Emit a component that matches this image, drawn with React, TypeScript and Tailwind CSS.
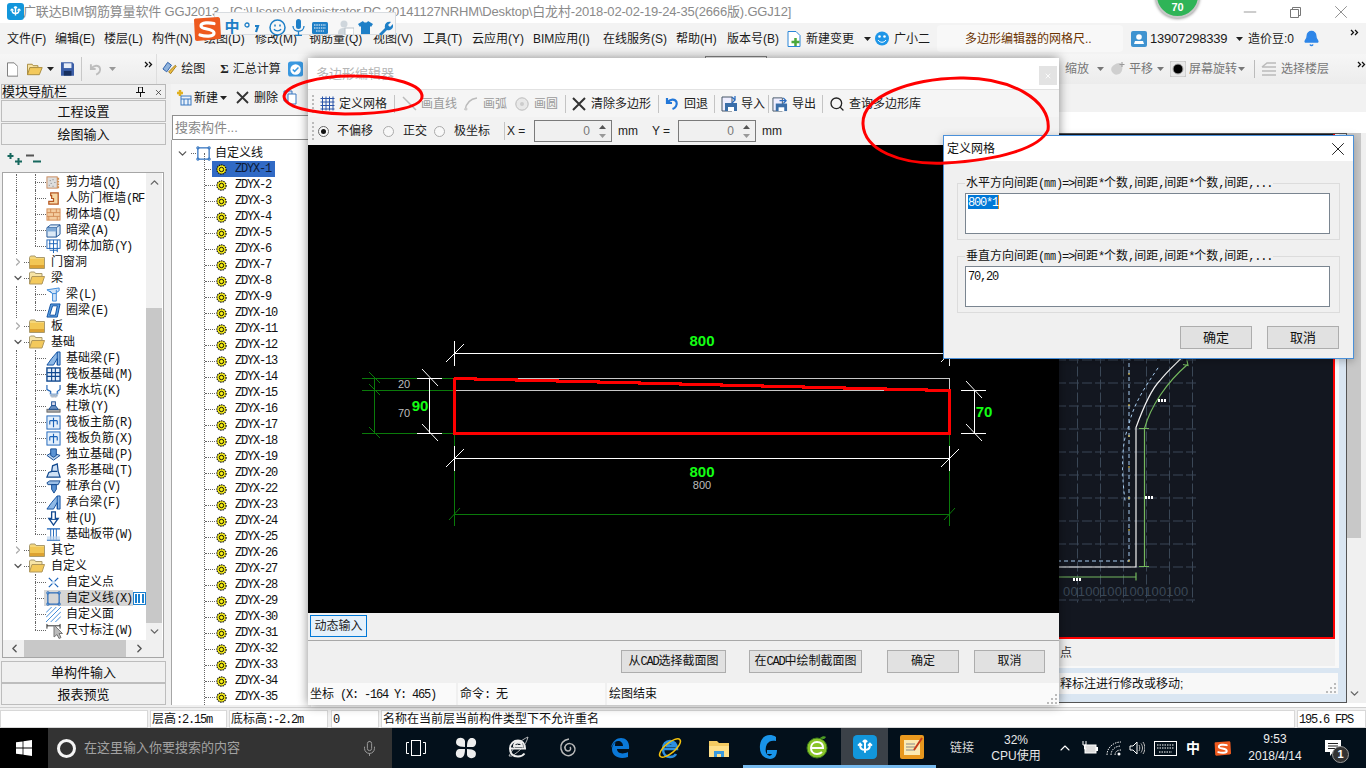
import React from 'react';
import { X, Minus, Mic, Bell, ChevronUp, ChevronDown, ChevronLeft, ChevronRight, Search } from 'lucide-react';

const MONO = "[font-family:'Liberation_Mono',monospace] tracking-[-1.2px]";

function Mixed({ t }: { t: string }) {
  const parts = t.split(/([\x00-\x7f]+)/).filter(Boolean);
  return (
    <span className="whitespace-pre">
      {parts.map((p, i) =>
        /^[\x00-\x7f]/.test(p) ? (
          <span key={i} className="[font-family:'Liberation_Mono',monospace] tracking-[-1.2px]">{p}</span>
        ) : (
          <span key={i}>{p}</span>
        ),
      )}
    </span>
  );
}

const S = ({ s = 16, w, h, v = '0 0 16 16', children, className }: any) => (
  <svg width={w ?? s} height={h ?? s} viewBox={v} fill="none" className={'shrink-0 ' + (className || '')}>
    {children}
  </svg>
);

const Caret = ({ c = '#222' }: { c?: string }) => (
  <svg width="7" height="4" viewBox="0 0 7 4" className="shrink-0"><path d="M0 0h7L3.5 4z" fill={c} /></svg>
);
const Dbl = () => (
  <svg width="9" height="7" viewBox="0 0 9 7" className="shrink-0"><path d="M1 1l2.5 2.5L1 6M5 1l2.5 2.5L5 6" stroke="#111" strokeWidth="1.3" fill="none" /></svg>
);
const Sep = ({ c = 'ml-[6px] mr-[6px]' }: { c?: string }) => <span className={'w-px h-[18px] bg-[#c4c4c4] shrink-0 ' + c} />;

const AppIcon = ({ s = 17 }: { s?: number }) => (
  <S s={s} v="0 0 17 17">
    <rect width="17" height="17" rx="3" fill="#1296db" />
    <path d="M8.5 3.5v9M5 7c0 2.5 1.5 3.5 3.5 3.5S12 9.5 12 7M8.5 3.5L7 5M8.5 3.5L10 5" stroke="#fff" strokeWidth="1.4" />
    <path d="M3.5 7.5L5 6l1.5 1.5M10.5 7.5L12 6l1.5 1.5" stroke="#fff" strokeWidth="1.1" />
  </S>
);

const FolderClosed = () => (
  <S w={16} h={14} v="0 0 16 14">
    <path d="M.5 2.5L1.5 1h4.5l1 1.5h8.5v11H.5z" fill="#f5d77b" stroke="#a99a6e" />
    <rect x="1" y="4" width="14" height="9" fill="#f2c755" />
    <rect x="1" y="10" width="14" height="3" fill="#dca232" />
  </S>
);
const FolderOpen = () => (
  <S w={16} h={14} v="0 0 16 14">
    <path d="M.5 13V2l1-1h4l1 1.5h6.5V5" stroke="#a99a6e" fill="#f7e4a6" />
    <path d="M3 5.5h12.5L13 13H.5z" fill="#f3c95c" stroke="#b0975a" />
  </S>
);

const icons: Record<string, React.ReactNode> = {
  shear: (
    <>
      <rect x="1" y="2" width="11" height="12" fill="#ddd" stroke="#c9895a" />
      <path d="M3 11h1M5 9h1M7 12h1M4 6h1M9 8h1M7 5h1" stroke="#777" />
      <path d="M13 3v11" stroke="#d08a4a" strokeDasharray="2 1" strokeWidth="2" />
    </>
  ),
  door: <path d="M5 2h8v12H3v-3h5V8H6V5H5z" fill="#f7d9a7" stroke="#b5551f" strokeWidth="1.3" />,
  brick: (
    <>
      <rect x="1" y="2" width="14" height="12" fill="#f4cda0" stroke="#d28d58" />
      <path d="M1 6h14M1 10h14M5 2v4M11 2v4M8 6v4M3 10v4M12 10v4" stroke="#d28d58" />
    </>
  ),
  dark: (
    <>
      <path d="M1 5l4-3h10v10l-4 3H1z" fill="#dbe9f6" stroke="#1a4f92" />
      <path d="M1 5h10v10M11 5l4-3" stroke="#1a4f92" />
      <rect x="1" y="5" width="10" height="4" fill="#7fa9d6" />
    </>
  ),
  rebar: (
    <>
      <rect x="1" y="1" width="14" height="9" fill="#fff" stroke="#1a62b8" />
      <path d="M3 5h9M8 1v14M4 12h8M4 1v10M12 1v13" stroke="#1a62b8" />
    </>
  ),
  beam: (
    <>
      <path d="M1 3l13-2v3l-3 2v9H7V7z" fill="#cfe3f8" stroke="#3a88d8" />
      <path d="M7 7h4M4 4l3 3M11 3v3" stroke="#3a88d8" />
    </>
  ),
  ring: <path d="M5 1h10l-3 14H1zM7 3l-3 10h6l2-10z" fill="#5c9fe0" stroke="#0d4ea0" fillRule="evenodd" />,
  fbeam: (
    <>
      <path d="M1 15l5-7 6-7h3v14h-3V8L8 15z" fill="#8fb9e6" stroke="#0d4ea0" />
      <path d="M12 1v14" stroke="#0d4ea0" />
    </>
  ),
  raft: (
    <>
      <rect x="1" y="1" width="14" height="14" fill="#e8f1fb" stroke="#12498f" strokeWidth="1.5" />
      <path d="M1 6h14M1 10h14M6 1v14M10 1v14" stroke="#12498f" strokeWidth="1.2" />
    </>
  ),
  pit: (
    <>
      <path d="M1 2v5l4 2v3h7V9l3-2V2" stroke="#1a62b8" strokeWidth="1.2" />
      <path d="M2 8l3 4h7l3-4 -3 7H5z" fill="#b9cfe8" />
      <path d="M5 13h7M6 15h5" stroke="#888" strokeDasharray="1 1" />
    </>
  ),
  pier: (
    <>
      <rect x="1" y="11" width="14" height="3" fill="#aaa" stroke="#666" />
      <path d="M3 11l3-4h4l3 4z" fill="#6a8fc0" stroke="#1a4f92" />
      <rect x="6" y="3" width="4" height="4" fill="#dde" stroke="#1a4f92" />
    </>
  ),
  cross: (
    <>
      <rect x="1" y="1" width="14" height="14" fill="#e3effb" stroke="#1a62b8" />
      <path d="M8 3v10M4 6h8M4 6v4M12 6v4" stroke="#1a62b8" strokeWidth="1.2" />
    </>
  ),
  iso: (
    <>
      <path d="M1 9l5-3 9 3-7 5z" fill="#bdd6f0" stroke="#12498f" />
      <path d="M5 2h6v7l-3 2-3-2z" fill="#5b93d3" stroke="#12498f" />
    </>
  ),
  strip: <path d="M1 15l2-5 3-1 1-6 5-2 1 8 2 6zM6 9h6" fill="#cfe1f5" stroke="#12498f" strokeWidth="1.3" />,
  cap: (
    <>
      <path d="M1 4l3-2h11l-2 4H2z" fill="#9cbfe6" stroke="#12498f" />
      <path d="M6 6h5v5l-2.5 4L6 11z" fill="#5b93d3" stroke="#12498f" />
    </>
  ),
  pile: (
    <>
      <path d="M6 1h4v7h3l-5 7-5-7h3z" fill="#fff" stroke="#12498f" strokeWidth="1.4" />
      <path d="M3 9h10" stroke="#12498f" />
    </>
  ),
  band: (
    <>
      <path d="M1 2h14M1 14h14" stroke="#1a62b8" strokeWidth="1.4" />
      <path d="M5 2v12M11 2v12M8 2v12" stroke="#1a62b8" />
      <rect x="1" y="10" width="14" height="4" fill="#bcd4ee" opacity=".7" />
    </>
  ),
  xpt: (
    <>
      <path d="M3 3l10 10M13 3L3 13" stroke="#1a62b8" strokeWidth="1.3" />
      <rect x="6.5" y="6.5" width="3" height="3" fill="#cfe3f8" />
    </>
  ),
  line: (
    <>
      <rect x="2" y="2" width="12" height="12" stroke="#1a62b8" strokeWidth="1.2" />
      <path d="M1 1h2v2H1zM13 1h2v2h-2zM1 13h2v2H1zM13 13h2v2h-2z" fill="#fff" stroke="#1a62b8" />
    </>
  ),
  hatch: <path d="M0 6L6 0M0 11L11 0M0 16L16 0M5 16L16 5M10 16l6-6" stroke="#3a88d8" />,
  dimn: <path d="M1 1v5M15 1v5M1 3h14" stroke="#222" />,
};

const TreeIcon = ({ k }: { k: string }) => <S s={15} v="0 0 16 16">{icons[k]}</S>;

const Gear = () => (
  <S s={11} v="0 0 11 11">
    <circle cx="5.5" cy="5.5" r="4.6" fill="#f7ee16" stroke="#111" strokeWidth="1.2" strokeDasharray="1.5 .8" />
    <circle cx="5.5" cy="5.5" r="2.2" fill="#f7ee16" stroke="#111" strokeWidth="1" />
  </S>
);

const Dots = ({ c }: { c: string }) => <span className={'absolute ' + c} />;

type R = { l: string; i?: string; end?: boolean; fold?: 'c' | 'o'; noOuter?: boolean; hi?: boolean; top?: boolean };
const treeRows: R[] = [
  { l: '剪力墙(Q)', i: 'shear' },
  { l: '人防门框墙(RF', i: 'door' },
  { l: '砌体墙(Q)', i: 'brick' },
  { l: '暗梁(A)', i: 'dark' },
  { l: '砌体加筋(Y)', i: 'rebar', end: true },
  { l: '门窗洞', fold: 'c' },
  { l: '梁', fold: 'o' },
  { l: '梁(L)', i: 'beam' },
  { l: '圈梁(E)', i: 'ring', end: true },
  { l: '板', fold: 'c' },
  { l: '基础', fold: 'o' },
  { l: '基础梁(F)', i: 'fbeam' },
  { l: '筏板基础(M)', i: 'raft' },
  { l: '集水坑(K)', i: 'pit' },
  { l: '柱墩(Y)', i: 'pier' },
  { l: '筏板主筋(R)', i: 'cross' },
  { l: '筏板负筋(X)', i: 'cross' },
  { l: '独立基础(P)', i: 'iso' },
  { l: '条形基础(T)', i: 'strip' },
  { l: '桩承台(V)', i: 'cap' },
  { l: '承台梁(F)', i: 'fbeam' },
  { l: '桩(U)', i: 'pile' },
  { l: '基础板带(W)', i: 'band', end: true },
  { l: '其它', fold: 'c' },
  { l: '自定义', fold: 'o' },
  { l: '自定义点', i: 'xpt', noOuter: true },
  { l: '自定义线(X)', i: 'line', noOuter: true, hi: true },
  { l: '自定义面', i: 'hatch', noOuter: true },
  { l: '尺寸标注(W)', i: 'dimn', noOuter: true, end: true },
];

function TreeRow({ r }: { r: R }) {
  if (r.fold) {
    return (
      <div className="relative h-4 flex items-center pl-[9px]">
        {r.fold === 'o' ? <ChevronDown size={12} strokeWidth={2.4} className="text-[#555]" /> : <ChevronRight size={12} strokeWidth={2.4} className="text-[#aaa]" />}
        <span className="w-[5px] border-t border-dotted border-[#666]" />
        <FolderClosedOrOpen o={r.fold === 'o'} />
        <span className="ml-[6px] text-[12px] text-[#111] whitespace-nowrap"><Mixed t={r.l} /></span>
      </div>
    );
  }
  return (
    <div className="relative h-4 flex items-center pl-[32px]">
      {!r.noOuter && <Dots c="left-[13px] top-0 bottom-0 border-l border-dotted border-[#666]" />}
      <Dots c={'left-[32px] top-0 border-l border-dotted border-[#666] ' + (r.end ? 'h-2' : 'bottom-0')} />
      <span className="w-[11px] border-t border-dotted border-[#666] shrink-0" />
      {r.hi && <span className="absolute left-[41px] w-[89px] top-0 bottom-0 bg-[#d6d6d6]" />}
      <span className="relative"><TreeIcon k={r.i!} /></span>
      <span className="relative ml-[5px] text-[12px] leading-4 text-[#111] whitespace-nowrap"><Mixed t={r.l} /></span>
      {r.hi && (
        <S s={13} v="0 0 13 13" className="relative ml-[1px]">
          <rect x=".5" y=".5" width="12" height="12" fill="#fff" stroke="#1a80d0" />
          <path d="M3 2v9M6 2v9M10 2v9" stroke="#1a80d0" strokeWidth="2" />
        </S>
      )}
      {r.l.startsWith('尺寸') && (
        <S w={10} h={16} v="0 0 10 16" className="absolute left-[50px] top-[2px]">
          <path d="M1 1v12l3-2.5 2 4 2-1-2-4h3.5z" fill="#bbb" stroke="#777" />
        </S>
      )}
    </div>
  );
}
const FolderClosedOrOpen = ({ o }: { o: boolean }) => (o ? <FolderOpen /> : <FolderClosed />);

const listNames = [...Array(20).keys()].map((i) => i + 1).concat([...Array(14).keys()].map((i) => i + 22)).map((n) => 'ZDYX-' + n);

const NavBtn = ({ t, c = '' }: { t: string; c?: string }) => (
  <div className={'h-[22px] border border-[#bdbdbd] bg-[#f0f0f0] flex items-center justify-center pt-[1px] text-[13px] text-[#111] ' + c}>{t}</div>
);

const Btn = ({ t, c }: { t: React.ReactNode; c: string }) => (
  <div className={'h-[23px] border border-[#adadad] bg-[#e1e1e1] flex items-center justify-center text-[12px] text-[#111] whitespace-nowrap shrink-0 ' + c}>{t}</div>
);

const Spin = () => (
  <div className="w-[78px] h-[22px] border border-[#7a7a7a] bg-[#f0f0f0] flex items-center justify-end shrink-0">
    <span className="text-[12px] text-[#777] mr-[9px]">0</span>
    <div className="flex flex-col gap-[5px] mr-[5px]">
      <svg width="7" height="4" viewBox="0 0 7 4"><path d="M3.5 0L7 4H0z" fill="#555" /></svg>
      <svg width="7" height="4" viewBox="0 0 7 4"><path d="M0 0h7L3.5 4z" fill="#999" /></svg>
    </div>
  </div>
);

const Radio = ({ on }: { on?: boolean }) => (
  <span className={'w-[11px] h-[11px] rounded-full border shrink-0 flex items-center justify-center bg-[#f8f8f8] ' + (on ? 'border-[#666]' : 'border-[#aaa]')}>
    {on && <span className="w-[5px] h-[5px] rounded-full bg-[#111]" />}
  </span>
);
const Handle = () => <span className="w-[2px] h-[18px] border-l-2 border-dotted border-[#bbb] shrink-0" />;

function PolygonWindow() {
  return (
    <div className="absolute left-[308px] top-[58px] w-[751px] h-[647px] bg-[#f0f0f0] shadow-[0_0_10px_rgba(0,0,0,0.45)] flex flex-col">
      <div className="h-[31px] bg-white flex items-center relative shrink-0">
        <span className="ml-[8px] text-[13px] text-[#b5b5b5]">多边形编辑器</span>
        <span className="absolute right-[2px] top-[8px] w-[18px] h-[19px] bg-[#e3e3e3] flex items-center justify-center">
          <X size={8} className="text-white" strokeWidth={2.5} />
        </span>
      </div>
      <div className="h-[28px] flex items-center pl-[4px] border-t border-[#e2e2e2] bg-[#f5f5f5] text-[12px] text-[#222] shrink-0 whitespace-nowrap">
        <Handle />
        <S s={15} v="0 0 15 15" className="ml-[6px]"><path d="M.5 2.5h14M.5 6h14M.5 9.5h14M.5 13h14M2.5.5v14M6 .5v14M9.5.5v14M13 .5v14" stroke="#2a55a8" /></S>
        <span className="ml-[4px] w-[48px]">定义网格</span>
        <Sep c="ml-[7px] mr-[7px]" />
        <S s={15} v="0 0 15 15"><path d="M1 1l13 13" stroke="#bbb" strokeWidth="1.5" /></S>
        <span className="ml-[4px] w-[35px] text-[#9a9a9a]">画直线</span>
        <S s={14} v="0 0 14 14" className="ml-[8px]"><path d="M1 13C2 7 6 2 13 1" stroke="#bbb" strokeWidth="1.5" /><circle cx="2" cy="12" r="1.5" fill="#ccc" /></S>
        <span className="ml-[5px] w-[24px] text-[#9a9a9a]">画弧</span>
        <S s={14} v="0 0 14 14" className="ml-[8px]"><circle cx="7" cy="7" r="6.2" fill="#e8e8e8" stroke="#bbb" /><circle cx="7" cy="7" r="2" fill="#ccc" /></S>
        <span className="ml-[5px] w-[24px] text-[#9a9a9a]">画圆</span>
        <Sep c="ml-[7px] mr-[6px]" />
        <S s={14} v="0 0 14 14"><path d="M1 1l12 12M13 1L1 13" stroke="#333" strokeWidth="2" /></S>
        <span className="ml-[5px] w-[60px]">清除多边形</span>
        <Sep c="ml-[7px] mr-[6px]" />
        <S s={14} v="0 0 14 14"><path d="M2 1v5h5M2.5 5.5C5 2 10 1.5 11.5 5c1 3-1 6-4 7" stroke="#2277d8" strokeWidth="2.2" /></S>
        <span className="ml-[5px] w-[24px]">回退</span>
        <Sep c="ml-[6px] mr-[6px]" />
        <S s={17} v="0 0 17 17"><path d="M1 2h10v14H1z" fill="#eef" stroke="#456" /><rect x="4" y="8" width="12" height="8" fill="#3b6ea8" /><rect x="7" y="12" width="6" height="4" fill="#fff" /><path d="M11 2l3 3-3 3M14 1v4" stroke="#2a6cc0" strokeWidth="1.3" /></S>
        <span className="ml-[3px] w-[24px]">导入</span>
        <Sep c="ml-[3px] mr-[3px]" />
        <S s={16} v="0 0 17 17"><path d="M1 2h10v14H1z" fill="#eef" stroke="#456" /><rect x="4" y="8" width="12" height="8" fill="#3b6ea8" /><rect x="7" y="12" width="6" height="4" fill="#fff" /><path d="M8 5h7M12 2l3 3-3 3" stroke="#2a6cc0" strokeWidth="1.3" /></S>
        <span className="ml-[4px] w-[24px]">导出</span>
        <Sep c="ml-[6px] mr-[6px]" />
        <Search size={16} strokeWidth={2} className="text-[#222] shrink-0" />
        <span className="ml-[4px]">查询多边形库</span>
      </div>
      <div className="h-[28px] flex items-center pl-[4px] text-[12px] text-[#222] shrink-0 whitespace-nowrap bg-[#f2f2f2]">
        <Handle />
        <span className="ml-[4px]"><Radio on /></span>
        <span className="ml-[8px] w-[35px]">不偏移</span>
        <span className="ml-[11px]"><Radio /></span>
        <span className="ml-[9px] w-[24px]">正交</span>
        <span className="ml-[7px]"><Radio /></span>
        <span className="ml-[9px] w-[36px]">极坐标</span>
        <span className="ml-[14px] w-px h-[18px] bg-[#c4c4c4]" />
        <span className="ml-[2px] w-[27px]">X =</span>
        <Spin />
        <span className="ml-[6px] w-[34px]">mm</span>
        <span className="w-[26px]">Y =</span>
        <Spin />
        <span className="ml-[6px]">mm</span>
      </div>
      <div className="h-[468px] bg-black shrink-0 relative overflow-hidden">
        <svg width="751" height="468" viewBox="308 145 751 468" className="absolute inset-0 block" shapeRendering="crispEdges">
          <g stroke="#0a7a0a" fill="none">
            <path d="M362 378.5h92M362 390.5h92M362 433.5h92M374.5 378v56M454.5 434v92M949.5 434v92M454 514.5h495" />
          </g>
          <g stroke="#0a7a0a" shapeRendering="auto">
            <path d="M369 372l11 11M369 384l11 11M369 427l11 11M449 520l11-12M944 520l11-12" />
          </g>
          <g stroke="#c8c8c8"><path d="M454 378.5h495M454 390.5h495M949.5 378v12" /></g>
          <g stroke="#fff" fill="none">
            <path d="M417 378.5h25M417 433.5h25M429.5 378v56M454 353.5h495M454.5 341v25M949.5 341v25M961 390.5h25M961 433.5h25M974.5 390v44M454 458.5h495M454.5 446v25M949.5 446v25" />
          </g>
          <g stroke="#fff" shapeRendering="auto">
            <path d="M446 362l18-18M941 362l18-18M422 369l16 17M422 424l16 17M966 381l16 17M966 424l16 17M446 467l18-18M941 467l18-18" />
          </g>
          <path
            d={'M454 378H475' + Array.from({ length: 12 }, (_, i) => `V${379 + i}H${Math.min(475 + 41 * (i + 1), 949.5)}`).join('') + 'V433.5H454.5V378'}
            fill="none"
            stroke="#f00"
            strokeWidth="3"
          />
          <g shapeRendering="auto" fontFamily="'Liberation Sans',sans-serif">
            <text x="702" y="346" textAnchor="middle" fontSize="15" fontWeight="700" fill="#14ff14">800</text>
            <text x="702" y="477" textAnchor="middle" fontSize="15" fontWeight="700" fill="#14ff14">800</text>
            <text x="702" y="489" textAnchor="middle" fontSize="11" fill="#bdbdbd">800</text>
            <text x="420" y="411" textAnchor="middle" fontSize="15" fontWeight="700" fill="#14ff14">90</text>
            <text x="984" y="417" textAnchor="middle" fontSize="15" fontWeight="700" fill="#14ff14">70</text>
            <text x="404" y="388" textAnchor="middle" fontSize="11" fill="#bdbdbd">20</text>
            <text x="404" y="417" textAnchor="middle" fontSize="11" fill="#bdbdbd">70</text>
          </g>
        </svg>
      </div>
      <div className="h-[28px] flex items-start pt-[2px] pl-[2px] border-b border-[#a8a8a8] shrink-0">
        <div className="w-[57px] h-[22px] border border-[#0078d7] bg-[#e5f1fb] flex items-center justify-center text-[12px] text-[#222]">动态输入</div>
      </div>
      <div className="h-[42px] flex items-center shrink-0 pl-[313px] pb-[2px]">
        <Btn t={<Mixed t="从CAD选择截面图" />} c="w-[105px]" />
        <Btn t={<Mixed t="在CAD中绘制截面图" />} c="w-[113px] ml-[23px]" />
        <Btn t="确定" c="w-[72px] ml-[25px]" />
        <Btn t="取消" c="w-[71px] ml-[15px]" />
      </div>
      <div className="flex-1 flex gap-[2px] text-[12px] text-[#111] whitespace-nowrap">
        <div className="w-[148px] bg-[#fafafa] flex items-center pl-[2px]"><Mixed t="坐标 (X: -164 Y: 465)" /></div>
        <div className="w-[147px] bg-[#fafafa] flex items-center pl-[2px]"><Mixed t="命令: 无" /></div>
        <div className="flex-1 bg-[#fafafa] flex items-center pl-[2px] relative">绘图结束<Grip /></div>
      </div>
    </div>
  );
}

const Grip = () => (
  <svg width="11" height="11" viewBox="0 0 11 11" className="absolute right-[1px] bottom-[1px]">
    <path d="M8 1h2v2H8zM4 5h2v2H4zM8 5h2v2H8zM0 9h2v2H0zM4 9h2v2H4zM8 9h2v2H8z" fill="#bbb" />
  </svg>
);

function GridDialog() {
  const legend = 'text-[12px] text-[#111] bg-[#f0f0f0] absolute left-[7px] -top-[8px] px-px leading-[15px] whitespace-nowrap';
  return (
    <div className="absolute left-[943px] top-[135px] w-[411px] h-[224px] border border-[#4a90d9] bg-[#f0f0f0] shadow-[0_2px_8px_rgba(0,0,0,0.25)] flex flex-col">
      <div className="h-[25px] bg-white flex items-center justify-between pl-[3px] pr-[4px] shrink-0">
        <span className="text-[12px] text-[#111]">定义网格</span>
        <X size={22} strokeWidth={1} className="text-[#111]" />
      </div>
      <div className="px-[13px] pt-[22px]">
        <div className="relative h-[57px] border border-[#dcdcdc] pt-[9px] pl-[7px] pr-[9px]">
          <div className={legend}><Mixed t="水平方向间距(㎜)=>间距*个数,间距,间距*个数,间距,..." /></div>
          <div className="h-[41px] bg-white border border-[#7a8590] pl-[2px] pt-[1px] text-[12px] leading-[14px]">
            <span className="bg-[#0078d7] text-white border-r border-[#e08a20]"><Mixed t="800*1" /></span>
          </div>
        </div>
        <div className="relative h-[57px] mt-[16px] border border-[#dcdcdc] pt-[9px] pl-[7px] pr-[9px]">
          <div className={legend}><Mixed t="垂直方向间距(㎜)=>间距*个数,间距,间距*个数,间距,..." /></div>
          <div className="h-[41px] bg-white border border-[#7a8590] pl-[2px] pt-[2px] text-[12px] leading-[14px] text-[#111]">
            <Mixed t="70,20" />
          </div>
        </div>
        <div className="flex justify-end mt-[13px] mr-[1px] gap-[15px]">
          <Btn t="确定" c="w-[72px] text-[13px]" />
          <Btn t="取消" c="w-[72px] text-[13px]" />
        </div>
      </div>
    </div>
  );
}

const gridX = [1074.5, 1097.5, 1120.5, 1143.5, 1166.5, 1189.5];
const gridY = [359.5, 382.5, 405.5, 428.5, 451.5, 474.5, 497.5, 520.5, 543.5, 566.5];

function CadCanvas() {
  return (
    <svg viewBox="308 134 1022 502" className="absolute inset-0 w-full h-full block">
      <g stroke="#3a4756" strokeDasharray="10 3" strokeWidth="1">
        {gridX.map((x) => <line key={x} x1={x} x2={x} y1={340} y2={602} />)}
        {gridY.map((y) => <line key={y} x1={1040} x2={1193} y1={y} y2={y} />)}
        <line x1="1040" x2="1192" y1="599.5" y2="599.5" />
      </g>
      <path d="M1040 566.5h93V427c8-22 15-38 24-47 7-9 14-15 22-23" stroke="#f2f2f2" strokeWidth="1.2" fill="none" />
      <path d="M1040 560.5h86V350" stroke="#a8cdf0" strokeWidth="1" strokeDasharray="4 3" fill="none" />
      <path d="M1122 500c-4-30-3-60 3-72 5-24 16-40 31-62" stroke="#a8cdf0" strokeWidth="1" strokeDasharray="3 3" fill="none" />
      <path d="M1040 576.5h93M1141.5 428v138M1141.5 428c6-22 22-46 43-64" stroke="#74b85e" strokeWidth="1.2" fill="none" />
      <path d="M1136 428h10M1136 566h10M1133 572v8M1180 364l5 1-1-5" stroke="#74b85e" strokeWidth="1.2" fill="none" />
      <path d="M1126 373v1M1126 404v1M1126 435v1M1126 466v1M1126 497v1M1126 529v1M1126 560v1" stroke="#f5d24a" strokeWidth="2" />
      <path d="M1142 497h8M1155 400h8M1070 579h8" stroke="#fff" strokeWidth="3" strokeDasharray="2 1" />
      <text x="1060" y="595" fontSize="13" fill="#3a4756" fontFamily="'Liberation Sans',sans-serif" letterSpacing="0.15">00100100100100100</text>
    </svg>
  );
}

const Tray = ({ c, children }: { c: string; children: React.ReactNode }) => (
  <div className={'h-full flex items-center justify-center shrink-0 ' + c}>{children}</div>
);

function Taskbar() {
  return (
    <div className="h-10 bg-[#03101b] flex shrink-0 text-white">
      <div className="w-12 h-full bg-black flex items-center justify-center">
        <svg width="16" height="16" viewBox="0 0 16 16"><path d="M0 2.3l6.6-.9v6.2H0zM7.4 1.3L16 0v7.6H7.4zM0 8.4h6.6v6.2L0 13.7zM7.4 8.4H16V16l-8.6-1.3z" fill="#fff" /></svg>
      </div>
      <div className="w-[344px] h-full bg-[#333] flex items-center pl-[9px] pr-[14px]">
        <span className="w-[19px] h-[19px] rounded-full border-[3px] border-[#f5f5f5] shrink-0" />
        <span className="ml-[8px] text-[13px] text-[#a2a2a2] flex-1">在这里输入你要搜索的内容</span>
        <Mic size={17} strokeWidth={1.4} className="text-[#9a9a9a]" />
      </div>
      <Tray c="w-[48px]">
        <svg width="20" height="16" viewBox="0 0 20 16"><rect x="5.5" y=".5" width="9" height="15" stroke="#fff" fill="none" /><path d="M3 2.5H.5v11H3M17 2.5h2.5v11H17" stroke="#fff" fill="none" /></svg>
      </Tray>
      <Tray c="w-[52px]">
        <svg width="22" height="22" viewBox="0 0 22 22"><path d="M10 10C2 10 0 7 1.5 3 3 0 9 0 10 4zM12 10c0-8 3-10 7-8.500 3 1.500 3 7.500-1 8.500zM12 12c8 0 10 3 8.500 7-1.500 3-7.500 3-8.500-1zM10 12c0 8-3 10-7 8.500-3-1.500-3-7.500 1-8.500z" fill="#eee" /></svg>
      </Tray>
      <Tray c="w-[51px]">
        <svg width="22" height="24" viewBox="0 0 22 24"><path d="M4 12.500h14c0-5-3-8-7-8s-8 3-8 8 3 8 8 8c3 0 5-1 6.500-3M7 10h8c0-2-1.500-3.500-4-3.500S7 8 7 10z" stroke="#eee" strokeWidth="2" fill="none" /><path d="M2 20C7 10 14 4 21 1c-2 8-8 14-16 19z" fill="none" stroke="#ddd" strokeWidth=".8" /></svg>
      </Tray>
      <Tray c="w-[51px]">
        <svg width="20" height="20" viewBox="0 0 20 20"><path d="M10 1C4 2 1 6 2 11c1 5 6 8 10 6s5-6 3-9-6-3-8-1-1 6 2 6 3-3 2-4" stroke="#bbb" strokeWidth="1.5" fill="none" /></svg>
      </Tray>
      <Tray c="w-[51px]">
        <svg width="22" height="22" viewBox="0 0 22 22"><path d="M2 11C3 4 8 1 12 1c5 0 9 4 8 11H8c0 4 5 6 11 3v5c-9 3-16-1-16-8 0-3 1-5 4-7-1 1-1 2-1 4h8c0-3-2-5-5-5-3 0-5 3-7 7z" fill="#0a78d8" /></svg>
      </Tray>
      <Tray c="w-[49px]">
        <svg width="26" height="26" viewBox="0 0 26 26"><path d="M7 14h13c0-5-3-8-7-8s-7 3-7 8 3 8 7 8c3 0 5-1 6-3M10 11c.5-2 2-3 3.500-3s3 1 3.500 3z" stroke="#2d8fe0" strokeWidth="2.500" fill="none" /><ellipse cx="13" cy="13" rx="13" ry="5" transform="rotate(-40 13 13)" stroke="#f4c20d" strokeWidth="1.500" fill="none" /></svg>
      </Tray>
      <Tray c="w-[49px]">
        <svg width="22" height="20" viewBox="0 0 22 20"><path d="M1 3h8l2 2h10v14H1z" fill="#f4cb62" /><path d="M1 8h20v11H1z" fill="#ffe08a" /><path d="M6 19v-6h10v6h-3v-3H9v3z" fill="#3b9adf" /></svg>
      </Tray>
      <Tray c="w-[50px] border-b-[3px] border-[#76b9ed]">
        <svg width="20" height="26" viewBox="0 0 20 26"><path d="M18 3C12-1 3 1 2 11c-1 9 4 14 10 14 5 0 7-4 7-9H9v4h5c-1 2-3 2-4 1-3-2-3-7-1-11 2-3 5-4 9-3z" fill="#1994e9" /></svg>
      </Tray>
      <Tray c="w-[48px] border-b-[3px] border-[#76b9ed]">
        <svg width="24" height="24" viewBox="0 0 24 24"><circle cx="12" cy="13" r="10" fill="#8ac52a" stroke="#3c7d1c" /><path d="M6 13h12c0-4-2-6-6-6s-6 3-6 6 2 6 6 6c2 0 4-1 5-2" stroke="#fff" strokeWidth="2" fill="none" /><path d="M15 3c2-2 5-2 6-1-1 2-3 3-6 1z" fill="#4b9a24" /></svg>
      </Tray>
      <Tray c="w-[47px] bg-[#3b4148] border-b-[3px] border-[#76b9ed]">
        <AppIcon s={24} />
      </Tray>
      <Tray c="w-[48px] border-b-[3px] border-[#76b9ed]">
        <svg width="24" height="24" viewBox="0 0 24 24"><rect width="24" height="24" rx="2" fill="#e8981e" /><rect x="4" y="5" width="16" height="15" fill="#fbeab3" /><path d="M6 9h9M6 12h9M6 15h9" stroke="#888" /><path d="M14 15L22 3" stroke="#c43b1a" strokeWidth="2" /></svg>
      </Tray>
      <Tray c="w-[52px] text-[12px] text-[#d8d8d8]">链接</Tray>
      <div className="w-[56px] h-full flex flex-col items-center justify-center text-[12px] leading-[16px] text-[#e8e8e8]">
        <span>32%</span>
        <span className="whitespace-nowrap">CPU使用</span>
      </div>
      <Tray c="w-[26px] ml-[8px]"><ChevronUp size={16} strokeWidth={1.6} /></Tray>
      <Tray c="w-[24px]">
        <svg width="16" height="14" viewBox="0 0 16 14"><rect x="3" y="4" width="11" height="8" stroke="#fff" fill="#ddd" /><path d="M1 0v4h3V0M2.500 4v4h2" stroke="#fff" fill="none" /><path d="M14 6h2v4h-2" fill="#fff" /></svg>
      </Tray>
      <Tray c="w-[24px]">
        <svg width="16" height="16" viewBox="0 0 16 16"><path d="M1 15C1 8 7 2 15 2M5 15c0-5 4-9 10-9M9 15c0-3 2-5 6-5" stroke="#eee" strokeDasharray="1.500 1" fill="none" /><circle cx="13" cy="14" r="1.500" fill="#fff" /></svg>
      </Tray>
      <Tray c="w-[22px]">
        <svg width="16" height="14" viewBox="0 0 16 14"><path d="M1 5h3l4-4v12l-4-4H1z" stroke="#fff" fill="none" /><path d="M10 4c1 2 1 4 0 6M12 2.500c2 3 2 6 0 9M14 1c2.500 4 2.500 8 0 12" stroke="#bbb" fill="none" /></svg>
      </Tray>
      <Tray c="w-[34px]">
        <svg width="23" height="15" viewBox="0 0 23 15"><rect x=".5" y=".5" width="22" height="14" stroke="#fff" fill="none" /><path d="M3 4h17M3 7h17M5 11h13" stroke="#fff" strokeDasharray="1.500 1" /></svg>
      </Tray>
      <Tray c="w-[22px] text-[14px] font-bold">中</Tray>
      <Tray c="w-[36px]"><Sogou s={17} /></Tray>
      <div className="w-[70px] h-full flex flex-col items-center justify-center text-[12px] leading-[17px] text-[#eee]">
        <span>9:53</span>
        <span>2018/4/14</span>
      </div>
      <div className="w-[46px] h-full relative flex items-center justify-center">
        <svg width="16" height="16" viewBox="0 0 16 16"><path d="M0 0h16v12H8l-3 4v-4H0z" fill="#fff" /><path d="M3 3.500h10M3 6h10M3 8.500h10" stroke="#222" /></svg>
        <span className="absolute left-[22px] top-[18px] w-[17px] h-[17px] rounded-full bg-[#333] border border-[#999] text-[11px] font-bold flex items-center justify-center">1</span>
      </div>
    </div>
  );
}

const Sogou = ({ s = 28 }: { s?: number }) => (
  <svg width={s} height={s} viewBox="0 0 28 24" className="shrink-0">
    <path d="M1 3C1 2 2 1.500 3 1.500L25 0c1 0 2 1 2 2l1 18c0 1-1 2-2 2L4 24c-1 0-2-1-2-2z" fill="#ee5a1f" />
    <path d="M21 6.500C17 5.500 8 5 8 9c0 4 13 2 13 7 0 4-9 3.500-14 2" stroke="#fff" strokeWidth="3.200" fill="none" strokeLinecap="round" />
  </svg>
);

function ImeBar() {
  return (
    <div className="absolute left-[193px] top-[12px] flex items-center">
      <div className="absolute left-[21px] top-0 w-[182px] h-[23px] bg-[#f7f7f7] border border-[#d8dce0]" />
      <span className="relative mt-[3px]"><Sogou s={28} /></span>
      <div className="relative flex items-center h-[23px] text-[#1e7fc7]">
        <span className="w-[22px] text-[15px] font-bold text-center">中</span>
        <span className="w-[18px] flex justify-center"><svg width="16" height="12" viewBox="0 0 16 12"><circle cx="3" cy="3" r="2" stroke="#1e7fc7" strokeWidth="1.300" fill="none" /><path d="M11 4h3l-2 6" stroke="#1e7fc7" strokeWidth="2.200" fill="none" /></svg></span>
        <span className="w-[32px] flex justify-center"><svg width="17" height="17" viewBox="0 0 17 17"><circle cx="8.500" cy="8.500" r="7.500" stroke="#1e7fc7" strokeWidth="1.500" fill="none" /><path d="M5 10c1 2.500 6 2.500 7 0" stroke="#1e7fc7" strokeWidth="1.300" fill="none" /><path d="M6 5.500v2M11 5.500v2" stroke="#1e7fc7" strokeWidth="1.500" /></svg></span>
        <span className="w-[10px] flex justify-center"><svg width="13" height="17" viewBox="0 0 13 17" className="shrink-0"><rect x="4" y="0" width="5" height="10" rx="2.500" fill="#1e7fc7" /><path d="M1 7c0 7 11 7 11 0M6.500 12v4M3 16.500h7" stroke="#1e7fc7" fill="none" strokeWidth="1.300" /></svg></span>
        <span className="w-[34px] flex justify-center"><svg width="16" height="12" viewBox="0 0 16 12"><rect width="16" height="12" rx="1.500" fill="#1e7fc7" /><path d="M2 3h12M2 6h12M4 9h8" stroke="#fff" strokeDasharray="1.500 .8" /></svg></span>
        <span className="w-[16px] flex justify-center"><svg width="17" height="15" viewBox="0 0 17 15" className="shrink-0"><circle cx="7" cy="4" r="3.500" fill="#cfd6dc" /><path d="M1 13c0-4 3-5 6-5s5 1 5 3v3H1z" fill="#cfd6dc" /><rect x="8" y="8" width="9" height="7" fill="#fff" stroke="#b9c2c9" /></svg></span>
        <span className="w-[24px] flex justify-center"><svg width="15" height="13" viewBox="0 0 15 13"><path d="M5 0L0 3l2 3 1-1v8h9V5l1 1 2-3-5-3c-1 2-4 2-5 0z" fill="#1e7fc7" /></svg></span>
        <span className="w-[16px] flex justify-center"><svg width="15" height="15" viewBox="0 0 15 15"><path d="M1 14l6-6c-1-4 2-7 6-6l-3 3 2 2 3-3c1 4-2 7-6 6l-6 6z" fill="#1e7fc7" /></svg></span>
      </div>
    </div>
  );
}

function Left() {
  return (
    <div className="w-[168px] h-full shrink-0 flex flex-col bg-[#f0f0f0] pl-px">
      <div className="h-[15px] flex items-center border border-[#b8b8b8] bg-[#f0f0f0] relative w-[165px]">
        <span className="text-[13px] text-[#111] leading-none">模块导航栏</span>
        <svg width="9" height="10" viewBox="0 0 9 10" className="absolute left-[134px] top-[2px]"><path d="M2.500 0v5M6.500 0v5M0 5.500h9M4.500 5v5M2 0h5" stroke="#111" /></svg>
        <X size={9} className="absolute left-[152px] top-[3px] text-[#333]" />
      </div>
      <NavBtn t="工程设置" c="w-[165px] mt-[1px]" />
      <NavBtn t="绘图输入" c="w-[165px] mt-[1px]" />
      <div className="h-[27px] w-[161px] ml-px bg-[#f0f0f0] flex items-center pl-[5px] gap-[3px]">
        <svg width="16" height="13" viewBox="0 0 16 13"><path d="M3.500 1v6M.5 4h6M11.500 6v7M8 9.500h7" stroke="#17685e" strokeWidth="2" /></svg>
        <svg width="16" height="13" viewBox="0 0 16 13"><path d="M0 3.500h8" stroke="#555" strokeWidth="2" /><path d="M7 9.500h8" stroke="#17685e" strokeWidth="2" /></svg>
      </div>
      <div className="w-[162px] ml-[1px] h-[486px] border border-[#a6a6a6] bg-white flex flex-col overflow-hidden">
        <div className="flex flex-1 min-h-0">
          <div className="w-[143px] pt-[1px] overflow-hidden shrink-0">
            {treeRows.map((r) => <TreeRow key={r.l} r={r} />)}
          </div>
          <div className="w-[16px] bg-[#f0f0f0] flex flex-col items-center">
            <ChevronUp size={13} strokeWidth={2.600} className="text-[#666] mt-[3px] shrink-0" />
            <div className="w-full h-[119px]" />
            <div className="w-full flex-1 bg-[#c8c8c8]" />
            <ChevronDown size={13} strokeWidth={2.600} className="text-[#666] my-[2px] shrink-0" />
          </div>
        </div>
        <div className="h-[17px] bg-[#f0f0f0] flex items-center shrink-0">
          <ChevronLeft size={13} strokeWidth={2.600} className="text-[#555] ml-[5px]" />
          <span className="w-[102px] h-full bg-[#c8c8c8] ml-[3px]" />
          <ChevronRight size={13} strokeWidth={2.600} className="text-[#555] ml-[7px]" />
        </div>
      </div>
      <NavBtn t="单构件输入" c="w-[165px] mt-[3px]" />
      <NavBtn t="报表预览" c="w-[165px]" />
    </div>
  );
}

function ListPane() {
  return (
    <div className="w-[140px] h-full shrink-0 flex flex-col bg-[#f0f0f0]">
      <div className="h-[31px] flex items-center pl-[4px] pb-[4px] text-[12px] text-[#111] whitespace-nowrap overflow-hidden bg-[#f3f3f3] shrink-0">
        <S s={17} v="0 0 17 17"><path d="M5 1v6M2 4h6" stroke="#e0b020" strokeWidth="2.500" /><rect x="6" y="7" width="10" height="9" fill="#eaf2fb" stroke="#3a78c0" /><path d="M6 10h10M9 10v6M13 10v6" stroke="#3a78c0" /></S>
        <span className="ml-[2px]">新建</span>
        <span className="ml-[2px]"><Caret /></span>
        <S s={13} v="0 0 13 13" className="ml-[9px]"><path d="M1 1l11 11M12 1L1 12" stroke="#333" strokeWidth="1.800" /></S>
        <span className="ml-[5px]">删除</span>
        <S s={15} v="0 0 15 15" className="ml-[5px]"><path d="M1 1h8v10H1z" fill="#cfe0f4" stroke="#3a78c0" /><path d="M5 4h8v10H5z" fill="#fff" stroke="#3a78c0" /></S>
      </div>
      <div className="h-[25px] border border-[#8f8f8f] bg-white ml-[1px] flex items-center pl-[2px] text-[13px] text-[#888] shrink-0">搜索构件...</div>
      <div className="h-[565px] bg-white border-l border-[#a6a6a6] relative overflow-hidden pt-[5px]">
        <div className="absolute left-[32px] top-[13px] bottom-0 border-l border-dotted border-[#666]" />
        <div className="relative h-4 flex items-center pl-[4px]">
          <ChevronDown size={13} strokeWidth={2.400} className="text-[#555]" />
          <span className="w-[5px] border-t border-dotted border-[#666] ml-[2px]" />
          <TreeIcon k="line" />
          <span className="ml-[4px] text-[12px] text-[#111]">自定义线</span>
        </div>
        {listNames.map((n, i) => (
          <div key={n} className="relative h-4 flex items-center pl-[33px]">
            <span className="w-[10px] border-t border-dotted border-[#666] shrink-0" />
            {i === 0 && <span className="absolute left-[40px] w-[63px] top-0 bottom-0 bg-[#316ac5]" />}
            <span className="relative ml-[1px]"><Gear /></span>
            <span className={MONO + ' relative ml-[8px] text-[12px] whitespace-nowrap ' + (i === 0 ? 'text-[#0d1c38]' : 'text-[#111]')}>{n}</span>
          </div>
        ))}
      </div>
    </div>
  );
}

function RightPane() {
  return (
    <div className="flex-1 h-full min-w-0 flex flex-col bg-[#f0f0f0]">
      <div className="h-[28px] shrink-0 bg-[#f2f2f2]" />
      <div className="h-[21px] shrink-0 bg-white" />
      <div className="flex flex-1 min-h-0 bg-white">
        <div className="w-[1036px] h-[570px] shrink-0 border border-[#555] border-l-0 bg-[#dae6f2] flex flex-col">
          <div className="w-[1028px] h-[534px] bg-[#f8f8f8] shrink-0 pr-[4px]">
            <div className="h-[505px] w-[1024px] bg-[#131720] border-r-2 border-b-2 border-[#f00] relative overflow-hidden">
              <CadCanvas />
            </div>
            <div className="h-[27px] bg-[#f0f0f0] flex items-center pl-[749px] text-[12px] text-[#333]">点</div>
          </div>
          <div className="mt-[5px] h-[21px] w-[1027px] bg-[#f8f8f8] flex items-center pl-[749px] text-[12px] text-[#111] relative whitespace-nowrap">
            释标注进行修改或移动;<Grip />
          </div>
        </div>
        <div className="w-[22px] h-[570px] bg-[#f0f0f0] flex flex-col items-center">
          <div className="w-[14px] h-[405px] bg-[#c8c8c8] mr-[8px] shrink-0" />
          <ChevronDown size={13} strokeWidth={2.600} className="text-[#666] mt-[149px] mr-[8px]" />
        </div>
      </div>
    </div>
  );
}

export default function App() {
  return (
    <div className="relative w-[1366px] h-[768px] overflow-hidden flex flex-col bg-[#f0f0f0] [font-family:'Liberation_Sans','Noto_Sans_CJK_SC',sans-serif]">
      {/* title bar */}
      <div className="h-[23px] bg-white flex items-center pl-[7px] shrink-0 relative">
        <AppIcon />
        <span className="text-[13px] text-[#8a8a8a] whitespace-nowrap tracking-[-0.17px] -ml-px">广联达BIM钢筋算量软件 GGJ2013 - [C:\Users\Administrator.PC-20141127NRHM\Desktop\白龙村-2018-02-02-19-24-35(2666版).GGJ12]</span>
        <div className="absolute left-[1240px] top-[1px] flex items-center">
          <Minus size={20} strokeWidth={1} className="text-[#888]" />
          <svg width="11" height="11" viewBox="0 0 11 11" className="ml-[30px]"><path d="M.5 2.500h8v8h-8zM2.500 2.500v-2h8v8h-2" stroke="#777" fill="none" /></svg>
          <X size={22} strokeWidth={1} className="text-[#888] ml-[29px]" />
        </div>
      </div>
      {/* menu */}
      <div className="h-[31px] bg-[#f3f3f3] flex items-center pl-[7px] text-[12px] text-[#1a1a1a] shrink-0 whitespace-nowrap">
        <span className="w-[48px]">文件(F)</span>
        <span className="w-[49px]">编辑(E)</span>
        <span className="w-[48px]">楼层(L)</span>
        <span className="w-[52px]">构件(N)</span>
        <span className="w-[51px]">绘图(D)</span>
        <span className="w-[54px]">修改(M)</span>
        <span className="w-[64px]">钢筋量(Q)</span>
        <span className="w-[50px]">视图(V)</span>
        <span className="w-[49px]">工具(T)</span>
        <span className="w-[61px]">云应用(Y)</span>
        <span className="w-[70px]">BIM应用(I)</span>
        <span className="w-[73px]">在线服务(S)</span>
        <span className="w-[51px]">帮助(H)</span>
        <span className="w-[60px]">版本号(B)</span>
        <span className="w-[19px] flex"><svg width="14" height="16" viewBox="0 0 14 16"><path d="M1 .5h8l4 4v11H1z" fill="#fff" stroke="#2a86d8" /><path d="M8.500 7v8M4.500 11h8" stroke="#4aa83a" strokeWidth="2.500" /></svg></span>
        <span className="w-[58px]">新建变更</span>
        <span className="w-[10px]"><Caret /></span>
        <span className="w-[20px] flex"><svg width="16" height="15" viewBox="0 0 16 15"><circle cx="8" cy="7.500" r="7" fill="#1e96e8" /><path d="M4 9c2 3 6 3 8 0" stroke="#fff" fill="none" /><circle cx="5.500" cy="5.500" r="1.300" fill="#fff" /><circle cx="10.500" cy="5.500" r="1.300" fill="#fff" /></svg></span>
        <span className="w-[43px]">广小二</span>
        <span className="w-[186px] h-[27px] bg-[#f8f8f8] rounded-sm flex items-center pl-[28px] text-[#6b3300]">多边形编辑器的网格尺..</span>
        <span className="ml-[8px] w-[19px] flex"><svg width="16" height="16" viewBox="0 0 16 16"><rect width="16" height="16" rx="2" fill="#3f93d0" /><circle cx="8" cy="6" r="2.800" fill="#fff" /><path d="M3 13h10l-1-3H4z" fill="#fff" /></svg></span>
        <span className="w-[86px] text-[13px] tracking-[-0.2px]">13907298339</span>
        <span className="w-[12px]"><Caret /></span>
        <span className="w-[62px] text-[12px]">造价豆:0</span>
        <Bell size={17} fill="#2e86e8" className="text-[#2e86e8] -ml-[7px]" />
        <span className="ml-[30px] -mt-[12px]"><Dbl /></span>
      </div>
      {/* toolbar */}
      <div className="h-[30px] bg-gradient-to-b from-[#f6f6f6] to-[#ececec] flex items-center pl-[7px] text-[12px] text-[#222] shrink-0 whitespace-nowrap">
        <svg width="12" height="15" viewBox="0 0 12 15"><path d="M.5.500h7l4 4v10H.5z" fill="#fff" stroke="#777" /></svg>
        <svg width="17" height="14" viewBox="0 0 17 14" className="ml-[9px]"><path d="M.5 13V2h5l1 1.500h5V5" fill="#f7e4a6" stroke="#a68a3e" /><path d="M3 5.500h13L13 13H.5z" fill="#f3c95c" stroke="#a68a3e" /></svg>
        <span className="ml-[3px]"><Caret /></span>
        <svg width="14" height="14" viewBox="0 0 14 14" className="ml-[7px]"><path d="M0 0h12l2 2v12H0z" fill="#3c5fa8" /><rect x="3" y="1" width="8" height="5" fill="#e8eef8" /><rect x="3" y="9" width="8" height="5" fill="#18305f" /></svg>
        <span className="ml-[7px] w-px h-[24px] bg-[#c8c8c8]" />
        <svg width="14" height="13" viewBox="0 0 14 13" className="ml-[7px]"><path d="M2 1v5h5M2.500 5.500C5 2 10 1.500 11.500 5c1 3-1 6-4 7" stroke="#bdbdbd" strokeWidth="2" fill="none" /></svg>
        <span className="ml-[7px]"><Caret c="#999" /></span>
        <span className="ml-[28px] -mt-[10px]"><Dbl /></span>
        <span className="ml-[3px] h-full w-px bg-[#dedede]" />
        <svg width="16" height="16" viewBox="0 0 16 16" className="ml-[5px]"><path d="M1 8L6 1l4 3-5 7z" fill="#8fb3dd" stroke="#2a5da8" /><path d="M7 11l7-7 1 1-6 8z" fill="#f0c040" stroke="#a07a20" /></svg>
        <span className="ml-[4px] text-[12px]">绘图</span>
        <span className="ml-[15px] w-[10px] font-bold text-[13px] [font-family:'Liberation_Serif',serif]">Σ</span>
        <span className="ml-[3px] text-[12px]">汇总计算</span>
        <svg width="16" height="16" viewBox="0 0 16 16" className="ml-[7px]"><rect width="16" height="16" rx="3" fill="#3a98e0" /><circle cx="8" cy="8.500" r="5.500" fill="#fff" /><path d="M5 8.500l2 2 4-4" stroke="#3a98e0" strokeWidth="1.500" fill="none" /></svg>
        <div className="ml-[762px] flex items-center text-[12px] text-[#777]">
          <span>缩放</span>
          <span className="ml-[8px]"><Caret c="#777" /></span>
          <svg width="16" height="16" viewBox="0 0 16 16" className="ml-[6px]"><path d="M3 12c-3-3-2-6 1-8s7-3 8 0 0 8-3 9-4 1-6-1z" fill="#cfcfcf" /><path d="M12 1v5M9.500 3.500h5" stroke="#999" /></svg>
          <span className="ml-[3px]">平移</span>
          <span className="ml-[4px]"><Caret c="#777" /></span>
          <svg width="16" height="16" viewBox="0 0 16 16" className="ml-[6px]"><rect width="16" height="16" rx="2" fill="#e8e8e8" stroke="#bbb" /><path d="M3 8a5 5 0 0 1 10 0M13 8a5 5 0 0 1-10 0" stroke="#aaa" /></svg>
          <span className="ml-[3px]">屏幕旋转</span>
          <span className="ml-[1px]"><Caret c="#777" /></span>
          <span className="ml-[9px] w-px h-[18px] bg-[#bbb]" />
          <svg width="16" height="14" viewBox="0 0 16 14" className="ml-[6px]"><path d="M1 5l5-4h9M1 9h14M1 13h14M1 5h14" stroke="#bbb" fill="none" strokeWidth="1.500" /></svg>
          <span className="ml-[4px]">选择楼层</span>
        </div>
        <span className="ml-[28px] -mt-[10px]"><Dbl /></span>
      </div>
      {/* main */}
      <div className="flex-1 min-h-0 flex">
        <Left />
        <div className="w-[3px] shrink-0 bg-[#f0f0f0]" />
        <ListPane />
        <RightPane />
      </div>
      {/* status */}
      <div className="h-[21px] flex gap-[2px] pt-[2px] bg-[#f0f0f0] text-[12px] text-[#111] shrink-0 whitespace-nowrap border-t border-[#d0d0d0]">
        <div className="w-[148px] bg-white border border-[#d8d8d8]" />
        <div className="w-[77px] bg-white border border-[#d8d8d8] flex items-center pl-px"><Mixed t="层高:2.15m" /></div>
        <div className="w-[99px] bg-white border border-[#d8d8d8] flex items-center pl-px"><Mixed t="底标高:-2.2m" /></div>
        <div className="w-[48px] bg-white border border-[#d8d8d8] flex items-center pl-px ml-[1px]"><Mixed t="0" /></div>
        <div className="w-[914px] bg-white border border-[#d8d8d8] flex items-center pl-px">名称在当前层当前构件类型下不允许重名</div>
        <div className="flex-1 bg-white border border-[#d8d8d8] flex items-center pl-px"><Mixed t="195.6 FPS" /></div>
      </div>
      <Taskbar />

      {/* floating windows */}
      <div className="absolute left-[705px] top-[56px] w-[62px] h-[6px] border border-b-0 border-[#888] bg-white" />
      <PolygonWindow />
      <GridDialog />
      <ImeBar />
      <div className="absolute left-[1155px] -top-[27px] w-[45px] h-[45px] rounded-full bg-[#2fb457] border-[2px] border-[#c8c8c8] shadow-[0_1px_3px_rgba(0,0,0,0.4)] flex items-end justify-center">
        <span className="text-[11px] font-bold text-white leading-[18px]">70</span>
      </div>
      {/* hand-drawn annotation marks */}
      <svg className="absolute inset-0 pointer-events-none" width="1366" height="768" viewBox="0 0 1366 768">
        <path d="M284 96C286 85 320 75 355 76C395 76 423 85 422 97C421 108 385 114 345 114C310 113 284 107 284 96Z" fill="none" stroke="#f00" strokeWidth="3" />
        <path d="M1048 130C1040 148 1000 160 945 163C900 165 864 150 863 124C862 95 912 79 960 78C1010 77 1052 100 1048 130Z" fill="none" stroke="#f00" strokeWidth="3" />
      </svg>
    </div>
  );
}
